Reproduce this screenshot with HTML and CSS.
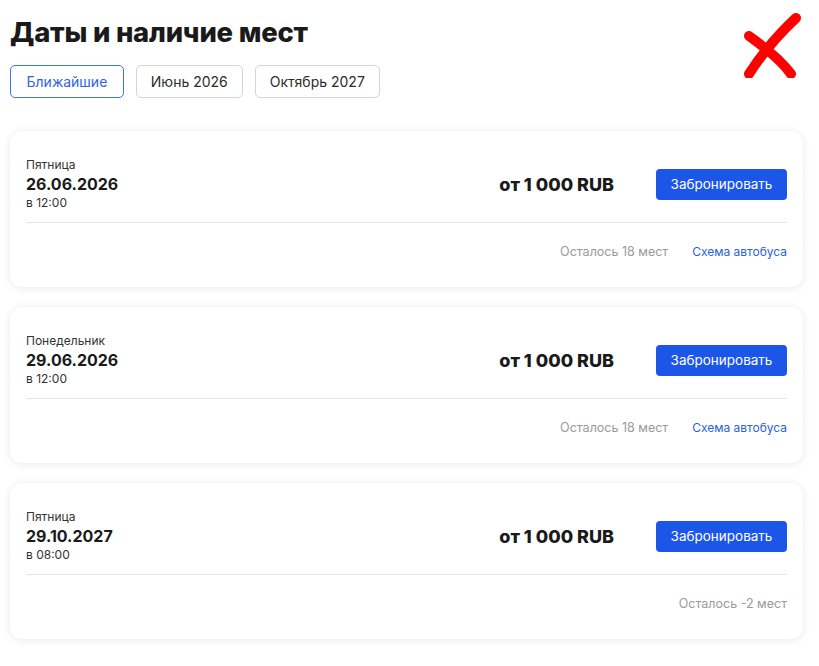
FILE: index.html
```html
<!DOCTYPE html>
<html lang="ru">

<head>
  <meta charset="utf-8">
  <title>Даты и наличие мест</title>
  <link rel="stylesheet" href="styles.css">
</head>

<body>
  <div class="page">
    <h1>Даты и наличие мест</h1>
    <div class="tabs">
      <button class="tab active">Ближайшие</button>
      <button class="tab">Июнь 2026</button>
      <button class="tab">Октябрь 2027</button>
    </div>

    <div class="dates">
      <div class="card">
        <div class="card-top">
          <div class="when">
            <div class="day">Пятница</div>
            <div class="date">26.06.2026</div>
            <div class="time">в 12:00</div>
          </div>
          <div class="price">от 1 000 RUB</div>
          <button class="book">Забронировать</button>
        </div>
        <div class="card-bottom">
          <span class="left">Осталось 18 мест</span>
          <a class="scheme" href="#">Схема автобуса</a>
        </div>
      </div>

      <div class="card">
        <div class="card-top">
          <div class="when">
            <div class="day">Понедельник</div>
            <div class="date">29.06.2026</div>
            <div class="time">в 12:00</div>
          </div>
          <div class="price">от 1 000 RUB</div>
          <button class="book">Забронировать</button>
        </div>
        <div class="card-bottom">
          <span class="left">Осталось 18 мест</span>
          <a class="scheme" href="#">Схема автобуса</a>
        </div>
      </div>

      <div class="card">
        <div class="card-top">
          <div class="when">
            <div class="day">Пятница</div>
            <div class="date">29.10.2027</div>
            <div class="time">в 08:00</div>
          </div>
          <div class="price">от 1 000 RUB</div>
          <button class="book">Забронировать</button>
        </div>
        <div class="card-bottom">
          <span class="left">Осталось -2 мест</span>
        </div>
      </div>
    </div>

    <!-- пометка поверх страницы -->
    <svg class="cross" width="60" height="66" viewBox="0 0 60 66">
      <path d="M55 6 C40 20 22 40 8 62" fill="none" stroke="#f00" stroke-width="10" stroke-linecap="round" />
      <path d="M8 24 C22 34 40 48 50 62" fill="none" stroke="#f00" stroke-width="10" stroke-linecap="round" />
    </svg>
  </div>
</body>

</html>
```

FILE: styles.css
```css
html {
  font-family: Inter, 'Noto Sans', sans-serif;
  color: #1a1a1a;
}

body {
  margin: 0;
  background: #fff;
}

.page {
  position: relative;
  padding: 10px 16px 20px 10px;
}

h1 {
  margin: 4px 0 0;
  font-size: 27.4px;
  line-height: 36px;
  font-weight: 800;
  letter-spacing: -0.2px;
}

.tabs {
  display: flex;
  gap: 12px;
  margin-top: 15px;
}

.tab {
  height: 33px;
  padding: 0 14px;
  border: 1px solid #d4d4d4;
  border-radius: 5px;
  background: #fff;
  font-family: inherit;
  font-size: 14px;
  color: #2b2b2b;
}

.tab.active {
  border-color: #3d74ef;
  color: #2f63e0;
  padding: 0 15.5px;
}

.dates {
  display: flex;
  flex-direction: column;
  gap: 20px;
  margin-top: 33px;
}

.card {
  background: #fff;
  border-radius: 12px;
  box-shadow: 0 1px 8px rgba(0, 0, 0, 0.09);
  padding: 26px 16px 27px;
}

.card-top {
  display: flex;
  align-items: center;
  height: 54px;
  padding-bottom: 11px;
  border-bottom: 1px solid #e6e6e6;
}

.when {
  flex: 1;
}

.day {
  font-size: 12px;
  line-height: 16px;
  color: #333;
}

.date {
  font-size: 16px;
  line-height: 22px;
  font-weight: 700;
}

.time {
  font-size: 12px;
  line-height: 16px;
  color: #333;
}

.price {
  font-size: 18px;
  font-weight: 800;
  margin-right: 42px;
}

.book {
  width: 131px;
  height: 31px;
  border: 0;
  border-radius: 4px;
  background: #1b56e8;
  color: #fff;
  font-family: inherit;
  font-size: 13.5px;
}

.card-bottom {
  display: flex;
  justify-content: flex-end;
  gap: 24px;
  margin-top: 21px;
  font-size: 12px;
  line-height: 16px;
}

.left {
  color: #9a9a9a;
  font-size: 12.5px;
}

.scheme {
  color: #2a62e0;
  text-decoration: none;
}

.cross {
  position: absolute;
  top: 12px;
  right: 18px;
}
```
